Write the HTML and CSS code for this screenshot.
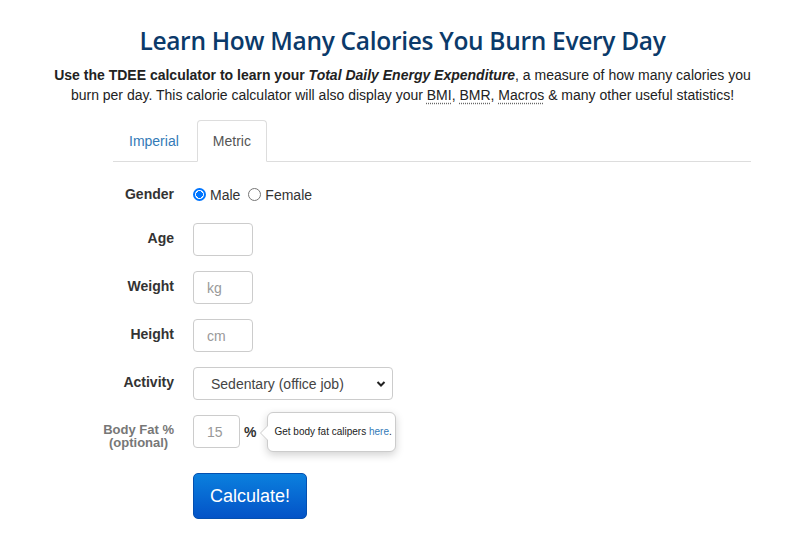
FILE: index.html
```html
<!DOCTYPE html>
<html>
<head>
<meta charset="utf-8">
<link rel="stylesheet" href="styles.css">
</head>
<body>
<div class="page">
  <h1 class="title">Learn How Many Calories You Burn Every Day</h1>
  <p class="intro"><b>Use the TDEE calculator to learn your <i>Total Daily Energy Expenditure</i></b>, a measure of how many calories you burn per day. This calorie calculator will also display your <span class="abbr">BMI</span>, <span class="abbr">BMR</span>, <span class="abbr">Macros</span> &amp; many other useful statistics!</p>
  <div class="tabs">
    <a class="tab">Imperial</a>
    <a class="tab active">Metric</a>
  </div>
  <form class="form">
    <div class="row row-gender">
      <label class="lbl lbl-center">Gender</label>
      <div class="field radios">
        <span class="radio on"></span><span class="rtext">Male</span>
        <span class="radio"></span><span class="rtext">Female</span>
      </div>
    </div>
    <div class="row">
      <label class="lbl lbl-up">Age</label>
      <div class="field"><input class="inp" type="text"></div>
    </div>
    <div class="row">
      <label class="lbl lbl-up">Weight</label>
      <div class="field"><input class="inp" type="text" placeholder="kg"></div>
    </div>
    <div class="row">
      <label class="lbl lbl-up">Height</label>
      <div class="field"><input class="inp" type="text" placeholder="cm"></div>
    </div>
    <div class="row">
      <label class="lbl lbl-up">Activity</label>
      <div class="field">
        <div class="select">
          <span class="sel-text">Sedentary (office job)</span>
          <svg class="chev" width="10" height="8" viewBox="0 0 10 8"><path d="M1.5 2 L5 5.5 L8.5 2" fill="none" stroke="#222" stroke-width="2"/></svg>
        </div>
      </div>
    </div>
    <div class="row">
      <label class="lbl"><span class="lbl-muted">Body Fat %<br>(optional)</span></label>
      <div class="field fat">
        <input class="inp inp-small" type="text" placeholder="15">
        <span class="pct">%</span>
        <div class="tip"><span>Get body fat calipers <a class="tip-link">here</a>.</span></div>
      </div>
    </div>
    <div class="row row-btn">
      <span class="lbl"></span>
      <div class="field"><button class="btn" type="button">Calculate!</button></div>
    </div>
  </form>
</div>
</body>
</html>
```
FILE: styles.css
```css
* { box-sizing: border-box; }
body {
  margin: 0;
  background: #fff;
  font-family: "Liberation Sans", Arial, sans-serif;
  color: #333;
  font-size: 14px;
}
.page {
  width: 805px;
  padding-top: 24px;
}
.title {
  margin: 0;
  text-align: center;
  font-family: "Open Sans", sans-serif;
  font-weight: 600;
  font-size: 24.5px;
  line-height: 34px;
  color: #0b3a6a;
  letter-spacing: -0.3px;
}
.intro {
  margin: 7px 0 0;
  text-align: center;
  line-height: 20px;
  color: #222;
  padding: 0 40px;
}
.abbr {
  text-decoration: underline dotted #666;
  text-underline-offset: 3px;
}
.tabs {
  margin: 15px 54px 0 113px;
  border-bottom: 1px solid #ddd;
  display: flex;
  height: 42px;
}
.tab {
  display: block;
  padding: 10px 15px;
  line-height: 20px;
  color: #337ab7;
  border: 1px solid transparent;
  border-radius: 4px 4px 0 0;
  margin-right: 2px;
  height: 42px;
}
.tab.active {
  color: #555;
  border-color: #ddd #ddd transparent;
  background: #fff;
}
.form {
  margin-top: 16px;
}
.row {
  display: flex;
  align-items: center;
  height: 33px;
  margin-bottom: 15px;
}
.row-gender {
  margin-bottom: 12px;
}
.lbl {
  width: 174px;
  text-align: right;
  font-weight: bold;
  color: #333;
  flex: none;
}
.lbl-up {
  padding-bottom: 4px;
}
.lbl-center {
  padding-bottom: 1px;
}
.lbl-muted {
  display: inline-block;
  color: #777;
  font-size: 13px;
  line-height: 13px;
  text-align: center;
  padding-top: 9px;
}
.field {
  margin-left: 19px;
  display: flex;
  align-items: center;
}
.radios {
  font-size: 14px;
  color: #333;
}
.radio {
  width: 13px;
  height: 13px;
  border-radius: 50%;
  border: 1px solid #767676;
  display: inline-block;
  margin-right: 4px;
  background: #fff;
}
.radio.on {
  border: 2px solid #0075ff;
  background: radial-gradient(circle, #0075ff 0 3.2px, #fff 3.6px);
}
.rtext { margin-right: 8px; }
.inp {
  width: 60px;
  height: 33px;
  border: 1px solid #ccc;
  border-radius: 4px;
  padding: 0 13px;
  font-family: "Liberation Sans", Arial, sans-serif;
  font-size: 14px;
  color: #555;
  outline: none;
}
.inp::placeholder { color: #999; }
.inp-small { width: 47px; }
.select {
  width: 200px;
  height: 33px;
  border: 1px solid #ccc;
  border-radius: 4px;
  display: flex;
  align-items: center;
  padding: 0 6px 0 17px;
  font-size: 14px;
  color: #444;
}
.sel-text { flex: 1; }
.chev { flex: none; }
.pct {
  margin-left: 4px;
  font-weight: bold;
  color: #333;
}
.tip {
  position: relative;
  margin-left: 11px;
  height: 40px;
  width: 129px;
  border: 1px solid #ccc;
  border-radius: 6px;
  background: #fff;
  box-shadow: 0 3px 8px rgba(0,0,0,0.18);
  font-size: 10px;
  color: #222;
  display: flex;
  align-items: center;
  padding-left: 6px;
  white-space: nowrap;
}
.tip::before {
  content: "";
  position: absolute;
  left: -8px;
  top: 12px;
  border-top: 8px solid transparent;
  border-bottom: 8px solid transparent;
  border-right: 8px solid #ccc;
}
.tip::after {
  content: "";
  position: absolute;
  left: -7px;
  top: 13px;
  border-top: 7px solid transparent;
  border-bottom: 7px solid transparent;
  border-right: 7px solid #fff;
}
.tip-link { color: #337ab7; }
.row-btn {
  height: 46px;
  margin-top: 25px;
}
.btn {
  width: 114px;
  height: 46px;
  border: 1px solid #0450b0;
  border-radius: 5px;
  background: linear-gradient(#0b80de, #0353c7);
  color: #fff;
  font-family: "Liberation Sans", Arial, sans-serif;
  font-size: 18px;
  padding: 0;
}
```
